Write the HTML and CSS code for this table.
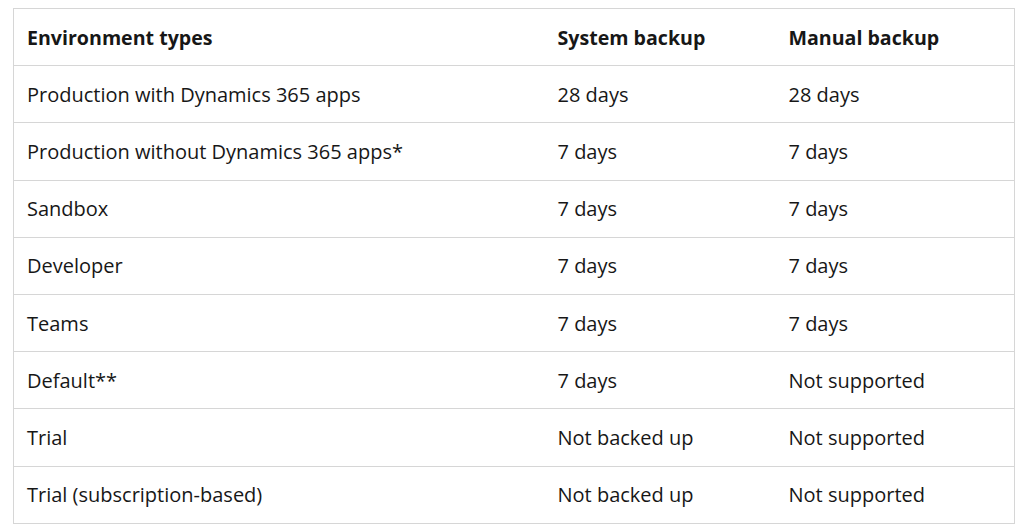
FILE: index.html
```html
<!DOCTYPE html>
<html>
<head>
<meta charset="utf-8">
<link rel="stylesheet" href="styles.css">
</head>
<body>
<table class="backup-table">
  <colgroup>
    <col class="col-type">
    <col class="col-system">
    <col class="col-manual">
  </colgroup>
  <thead>
    <tr><th>Environment types</th><th>System backup</th><th>Manual backup</th></tr>
  </thead>
  <tbody>
    <tr><td>Production with Dynamics 365 apps</td><td>28 days</td><td>28 days</td></tr>
    <tr><td>Production without Dynamics 365 apps*</td><td>7 days</td><td>7 days</td></tr>
    <tr><td>Sandbox</td><td>7 days</td><td>7 days</td></tr>
    <tr><td>Developer</td><td>7 days</td><td>7 days</td></tr>
    <tr><td>Teams</td><td>7 days</td><td>7 days</td></tr>
    <tr><td>Default**</td><td>7 days</td><td>Not supported</td></tr>
    <tr><td>Trial</td><td>Not backed up</td><td>Not supported</td></tr>
    <tr><td>Trial (subscription-based)</td><td>Not backed up</td><td>Not supported</td></tr>
  </tbody>
</table>
</body>
</html>
```
FILE: styles.css
```css
html, body {
  margin: 0;
  padding: 0;
  background: #ffffff;
}
body {
  padding: 8px 0 0 13px;
  font-family: "Open Sans", "Noto Sans", sans-serif;
  color: #171717;
}
.backup-table {
  border-collapse: collapse;
  width: 1001px;
  table-layout: fixed;
  font-size: 20px;
}
.col-type { width: 531px; }
.col-system { width: 231px; }
.col-manual { width: 239px; }
.backup-table th,
.backup-table td {
  border: 1px solid #d6d6d6;
  border-left: none;
  border-right: none;
  height: 56.2px;
  padding: 0 13px;
  text-align: left;
  vertical-align: middle;
  white-space: nowrap;
}
.backup-table tr > :first-child { border-left: 1px solid #d6d6d6; }
.backup-table tr > :last-child { border-right: 1px solid #d6d6d6; }
.backup-table th {
  font-weight: 700;
  font-size: 19.6px;
}
.backup-table td {
  font-weight: 400;
}
```
